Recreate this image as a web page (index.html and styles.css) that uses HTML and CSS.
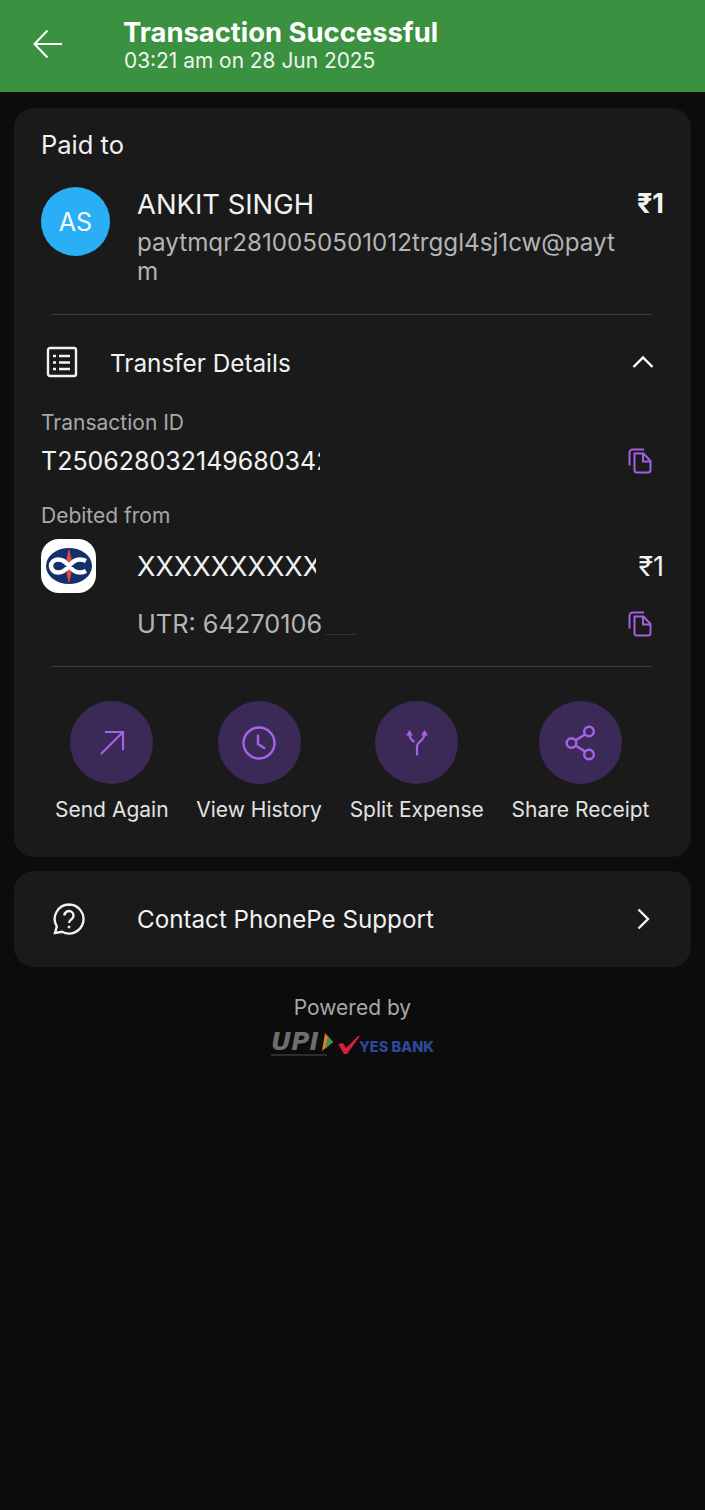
FILE: index.html
```html
<!DOCTYPE html>
<html lang="en">
<head>
  <meta charset="UTF-8">
  <meta name="viewport" content="width=device-width, initial-scale=1.0">
  <title>Transaction Successful</title>
  <link rel="stylesheet" href="styles.css">
</head>
<body>
  <header class="topbar">
    <svg class="back" width="30" height="30" viewBox="0 0 30 30"><path d="M29 15H2M14.500 1.500 1.500 15l13 13.500" fill="none" stroke="#fff" stroke-width="2"/></svg>
    <div class="topbar-text">
      <div class="topbar-title">Transaction Successful</div>
      <div class="topbar-sub">03:21 am on 28 Jun 2025</div>
    </div>
  </header>

  <section class="card main-card">
    <div class="paid-label">Paid to</div>
    <div class="payee">
      <div class="avatar">AS</div>
      <div class="payee-info">
        <div class="payee-name">ANKIT SINGH</div>
        <div class="payee-upi">paytmqr2810050501012trggl4sj1cw@payt<br>m</div>
      </div>
      <div class="amount bold">₹1</div>
    </div>
    <div class="divider"></div>

    <div class="details-head">
      <svg class="list-icon" width="32" height="32" viewBox="0 0 32 32" fill="none" stroke="#f2f2f2" stroke-width="2.400"><rect x="2" y="2" width="28" height="28" rx="2"/><path d="M13 10h11M13 16.500h11M13 23h11"/><path d="M7 10h3M7 16.500h3M7 23h3"/></svg>
      <div class="details-title">Transfer Details</div>
      <svg class="chevron" width="24" height="14" viewBox="0 0 24 14"><path d="M2.500 12 12 2.500 21.500 12" fill="none" stroke="#fff" stroke-width="2.400"/></svg>
    </div>

    <div class="field-label txn-label">Transaction ID</div>
    <div class="value-row">
      <div class="value clip-id">T250628032149680342</div>
      <svg class="copy" width="24" height="26" viewBox="0 0 24 26" fill="none" stroke="#a25fe0" stroke-width="2"><path d="M16 1.500H4.500a3 3 0 0 0-3 3v13"/><path d="M6.500 5.500h9l7 7.500v9a2.500 2.500 0 0 1-2.500 2.500H9a2.500 2.500 0 0 1-2.500-2.500z"/><path d="M15 5.500v8h7.500"/></svg>
    </div>

    <div class="field-label debit-label">Debited from</div>
    <div class="bank-row">
      <div class="bank-logo">
        <svg width="46" height="36" viewBox="0 0 46 36"><ellipse cx="23" cy="18" rx="23" ry="18" fill="#14306c"/><path d="M23 0 20.500 11 23 18l2.500-7zM23 36l-2.500-11 2.500-7 2.500 7z" fill="#e8453c"/><path d="M40 13c-2-1-4-1.500-6-1.500-5 0-8 2.500-11 6.500s-6 6.500-11 6.500c-4 0-7-3-7-6.500s3-6.500 7-6.500c5 0 8 2.500 11 6.500s6 6.500 11 6.500c2 0 4-.5 6-1.500" fill="none" stroke="#fff" stroke-width="4.500"/></svg>
      </div>
      <div class="bank-info">
        <div class="value-row bank-account">
          <div class="value acct clip-acct">XXXXXXXXXXX</div>
          <div class="amount">₹1</div>
        </div>
        <div class="value-row utr-row">
          <div class="utr-wrap">
            <div class="utr">UTR: 64270106</div>
            <div class="utr-smudge"></div>
          </div>
          <svg class="copy" width="24" height="26" viewBox="0 0 24 26" fill="none" stroke="#a25fe0" stroke-width="2"><path d="M16 1.500H4.500a3 3 0 0 0-3 3v13"/><path d="M6.500 5.500h9l7 7.500v9a2.500 2.500 0 0 1-2.500 2.500H9a2.500 2.500 0 0 1-2.500-2.500z"/><path d="M15 5.500v8h7.500"/></svg>
        </div>
      </div>
    </div>
    <div class="divider second"></div>

    <div class="actions">
      <div class="action">
        <div class="action-circle"><svg width="28" height="28" viewBox="0 0 28 28" fill="none" stroke="#a862ea" stroke-width="2.200"><path d="M3 25 25 3M7 3h18v18"/></svg></div>
        <div class="action-label">Send Again</div>
      </div>
      <div class="action">
        <div class="action-circle"><svg width="36" height="36" viewBox="0 0 36 36" fill="none" stroke="#a862ea" stroke-width="2.400"><circle cx="18" cy="18" r="15.500"/><path d="M17 9.500V19l7 4.500"/></svg></div>
        <div class="action-label">View History</div>
      </div>
      <div class="action">
        <div class="action-circle"><svg width="24" height="27" viewBox="0 0 24 27" fill="none" stroke="#a862ea" stroke-width="2.200"><path d="M12 26.500V17c0-4 7.500-5.500 7.500-12V3M9.500 13C7 11.500 4.500 9 4.500 5V3"/><path d="M1 6.500 4.500 1 8 6.500zM16 6.500 19.500 1 23 6.500z" fill="#a862ea" stroke="none"/></svg></div>
        <div class="action-label">Split Expense</div>
      </div>
      <div class="action">
        <div class="action-circle"><svg width="32" height="36" viewBox="0 0 32 36" fill="none" stroke="#a862ea" stroke-width="2.400"><circle cx="24" cy="6.500" r="4.800"/><circle cx="6.500" cy="18" r="4.800"/><circle cx="24" cy="29.500" r="4.800"/><path d="M20 9.500 10.500 15.500M10.500 20.500 20 26.500"/></svg></div>
        <div class="action-label">Share Receipt</div>
      </div>
    </div>
  </section>

  <section class="card support">
    <svg class="help" width="34" height="34" viewBox="0 0 34 34" fill="none" stroke="#f2f2f2" stroke-width="2.400"><path d="M17 2.500a14.500 14.500 0 1 1-7 27.200L3 31l1.800-6.500A14.500 14.500 0 0 1 17 2.500z"/><path d="M12.500 13.500a4.500 4.500 0 1 1 7 3.700c-1.500 1-2.500 1.800-2.500 3.800"/><circle cx="17" cy="25" r="1" fill="#f2f2f2" stroke-width="1"/></svg>
    <div class="support-text">Contact PhonePe Support</div>
    <svg width="14" height="22" viewBox="0 0 14 22"><path d="M2.500 1.500 12 11l-9.500 9.500" fill="none" stroke="#f2f2f2" stroke-width="2.400"/></svg>
  </section>

  <footer class="powered">
    <div class="powered-text">Powered by</div>
    <div class="powered-logos">
      <div class="upi">
        <div class="upi-top">
          <span class="upi-word">UPI</span>
          <svg width="11" height="18" viewBox="0 0 11 18"><path d="M3 0 11 9 0 18z" fill="#e07b2a"/><path d="M6 3 11 9 3 16z" fill="#3f8f4a"/></svg>
        </div>
        <div class="upi-tagline"></div>
      </div>
      <svg class="tick" width="22" height="18" viewBox="0 0 22 18"><path d="M0 8 5 7l3 5L20 0h2L9 18H6z" fill="#d3203c"/></svg>
      <span class="yes-bank">YES BANK</span>
    </div>
  </footer>
</body>
</html>
```

FILE: styles.css
```css
* {
  box-sizing: border-box;
}

body {
  margin: 0;
  height: 1510px;
  background-color: #0c0c0d;
  font-family: "Inter", "Liberation Sans", sans-serif;
  color: #f2f2f2;
  overflow: hidden;
}

.topbar {
  height: 92px;
  background-color: #3a913f;
  display: flex;
  align-items: center;
  padding-left: 33px;
  color: #fff;
}

.back {
  margin-top: -4px;
}

.topbar-text {
  margin-left: 61px;
  margin-top: -1px;
}

.topbar-title {
  font-size: 27.4px;
  font-weight: 700;
  line-height: 32px;
  margin-left: -1px;
  margin-top: -1px;
}

.topbar-sub {
  font-size: 20.9px;
  line-height: 26px;
  color: #eef5ee;
}

.card {
  background-color: #1a1a1b;
  border-radius: 20px;
  margin-left: 14px;
  width: 677px;
}

.main-card {
  margin-top: 16px;
  height: 749px;
  padding: 21px 27px 0;
}

.paid-label {
  font-size: 25.500px;
  line-height: 32px;
}

.payee {
  display: flex;
  margin-top: 26px;
}

.avatar {
  width: 69px;
  height: 69px;
  border-radius: 50%;
  background-color: #2aaef5;
  color: #f4fbff;
  display: flex;
  align-items: center;
  justify-content: center;
  font-size: 25px;
  flex-shrink: 0;
}

.payee-info {
  margin-left: 27px;
  flex: 1;
}

.payee-name {
  font-size: 27.4px;
  line-height: 34px;
}

.payee-upi {
  font-size: 24.200px;
  line-height: 29px;
  color: #b4b4b4;
  margin-top: 7px;
}

.amount {
  font-size: 27px;
  line-height: 34px;
  color: #f2f2f2;
}

.amount.bold {
  font-weight: 700;
}

.divider {
  height: 1px;
  background-color: #3a3a3b;
  margin: 28px 12px 0 10px;
}

.divider.second {
  margin-top: 25px;
}

.details-head {
  display: flex;
  align-items: center;
  margin-top: 32px;
  padding-left: 5px;
}

.list-icon {
  margin-top: -3px;
}

.details-title {
  font-size: 24.300px;
  line-height: 32px;
  margin-left: 32px;
  flex: 1;
}

.chevron {
  margin-right: 9px;
  margin-top: -3px;
}

.field-label {
  font-size: 21px;
  line-height: 26px;
  color: #a8a8a8;
}

.txn-label {
  margin-top: 31px;
}

.debit-label {
  margin-top: 25px;
}

.value-row {
  display: flex;
  align-items: center;
  justify-content: space-between;
}

.txn-label + .value-row {
  margin-top: 8px;
  padding-right: 12px;
}

.value {
  font-size: 25px;
  line-height: 34px;
  white-space: nowrap;
  overflow: hidden;
}

.value.acct {
  font-size: 27px;
}

.clip-id {
  width: 279px;
}

.clip-acct {
  width: 179px;
}

.bank-row {
  display: flex;
  margin-top: 10px;
}

.bank-logo {
  width: 55px;
  height: 54px;
  border-radius: 18px;
  background-color: #fff;
  display: flex;
  align-items: center;
  justify-content: center;
  flex-shrink: 0;
}

.bank-info {
  margin-left: 41px;
  flex: 1;
}

.bank-account {
  margin-top: 11px;
}

.utr-row {
  margin-top: 23px;
  padding-right: 12px;
}

.utr-wrap {
  display: flex;
  align-items: flex-end;
}

.utr {
  font-size: 25.300px;
  line-height: 34px;
  color: #b4b4b4;
  white-space: nowrap;
}

.utr-smudge {
  width: 30px;
  height: 1px;
  background-color: #333;
  margin: 0 0 6px 4px;
}

.actions {
  display: flex;
  justify-content: space-between;
  margin-top: 34px;
  padding: 0 14.500px 0 14px;
}

.action {
  display: flex;
  flex-direction: column;
  align-items: center;
}

.action-circle {
  width: 83px;
  height: 83px;
  border-radius: 50%;
  background-color: #3b2a57;
  display: flex;
  align-items: center;
  justify-content: center;
}

.action-label {
  font-size: 21px;
  line-height: 28px;
  margin-top: 12px;
  color: #e2e2e2;
}

.support {
  margin-top: 14px;
  height: 96px;
  display: flex;
  align-items: center;
  padding: 0 41px 0 38px;
}

.support-text {
  font-size: 24.200px;
  margin-left: 51px;
  flex: 1;
}

.powered {
  display: flex;
  flex-direction: column;
  align-items: center;
  margin-top: 27px;
}

.powered-text {
  font-size: 21px;
  line-height: 28px;
  color: #a8a8a8;
}

.powered-logos {
  display: flex;
  align-items: center;
  margin-top: 11px;
}

.upi {
  display: flex;
  flex-direction: column;
}

.upi-top {
  display: flex;
  align-items: center;
}

.upi-word {
  font-family: "DejaVu Sans", sans-serif;
  font-size: 25px;
  line-height: 18px;
  font-weight: 700;
  font-style: italic;
  color: #6e6e6e;
  margin-right: 3px;
}

.upi-tagline {
  height: 2px;
  width: 56px;
  margin-top: 3px;
  background-color: #2c2c2c;
}

.tick {
  margin-left: 5px;
}

.yes-bank {
  font-size: 14.500px;
  font-weight: 800;
  color: #2d4a98;
  margin-left: -1px;
  margin-top: 4px;
}
```
